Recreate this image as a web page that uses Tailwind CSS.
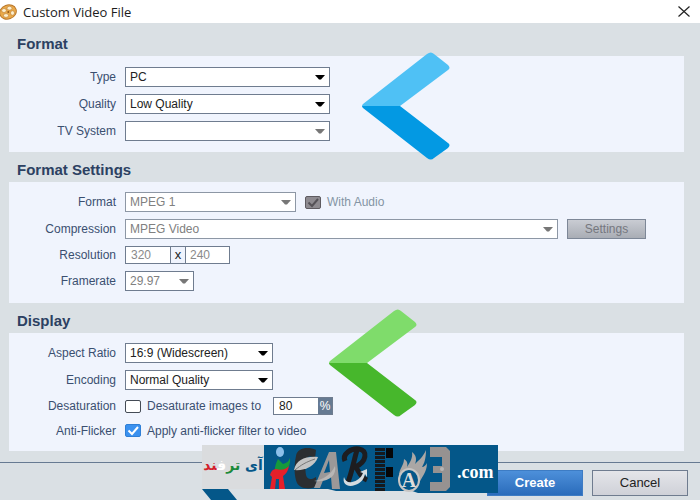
<!DOCTYPE html>
<html lang="en">
<head>
  <meta charset="UTF-8">
  <meta name="viewport" content="width=device-width, initial-scale=1.0">
  <title>Custom Video File</title>
  <script src="https://cdn.jsdelivr.net/npm/@tailwindcss/browser@4"></script>
</head>
<body class="bg-[#dae0e4] font-['Liberation_Sans',sans-serif] text-[12px] text-[#3a4f70]">
  <svg class="absolute h-0 w-0">
    <symbol id="caret" viewBox="0 0 10 5"><path d="M0 0h10L6 4.500H4z" fill="currentColor"/></symbol>
    <symbol id="tick" viewBox="0 0 16 13"><path d="M3.500 6.500l3.500 3.500 6-7" fill="none" stroke="currentColor" stroke-width="2"/></symbol>
    <clipPath id="upper"><path d="M0 0h88v54H0z"/></clipPath>
    <clipPath id="lower"><path d="M0 54h88v54H0z"/></clipPath>
    <path id="chevron" d="M1 52L65 2q4-3 7 0l14 11q3 3 0 5L38 54l48 37q3 2 0 5l-14 10q-3 3-7 0L1 56q-2-2 0-4z"/>
  </svg>

  <div class="relative min-h-screen overflow-hidden">
    <!-- Title bar -->
    <header class="flex h-[23px] items-center justify-between bg-white pr-[10px]">
      <div class="flex items-center gap-[6px]">
        <svg class="h-4 w-[17px]" viewBox="0 0 17 16">
          <ellipse cx="8" cy="8" rx="9" ry="7.500" transform="rotate(-20 8 8)" fill="#b9772a"/>
          <ellipse cx="8" cy="8" rx="8" ry="6.500" transform="rotate(-20 8 8)" fill="#e9a94a"/>
          <g fill="#fdf0cf" stroke="#b06f22" stroke-width=".5">
            <ellipse cx="4" cy="6.500" rx="2.300" ry="2"/>
            <ellipse cx="9.500" cy="4.200" rx="2.500" ry="1.900"/>
            <ellipse cx="12.500" cy="9" rx="2" ry="2.200"/>
            <ellipse cx="6" cy="11.500" rx="2.500" ry="1.900"/>
          </g>
          <circle cx="8.300" cy="8" r="1" fill="#8f5716"/>
        </svg>
        <h1 class="font-['Open_Sans',sans-serif] text-[13px] leading-5 text-[#1c1c1c]">Custom Video File</h1>
      </div>
      <button type="button" aria-label="Close">
        <svg class="h-[11px] w-[12px]" viewBox="0 0 12 11"><path d="M.5.5l11 10M11.500.5l-11 10" stroke="#222" stroke-width="1.200"/></svg>
      </button>
    </header>

    <main class="pt-[3px] pr-4 pl-[9px]">
      <!-- Format -->
      <section class="pt-[6px]">
        <h2 class="px-2 text-[15px] leading-6 font-bold text-[#2c4162]">Format</h2>
        <div class="flex flex-col gap-[7px] bg-[#f0f4fd] py-[11px]">
          <div class="flex items-center gap-[9px]">
            <label for="type" class="w-[107px] text-right">Type</label>
            <div class="relative w-[205px]">
              <select id="type" class="block h-5 w-full appearance-none border border-[#6f7c8f] bg-white px-1 text-[#222]"><option>PC</option></select>
              <svg class="pointer-events-none absolute top-[8px] right-[5px] h-[5px] w-[10px] text-black"><use href="#caret"/></svg>
            </div>
          </div>
          <div class="flex items-center gap-[9px]">
            <label for="quality" class="w-[107px] text-right">Quality</label>
            <div class="relative w-[205px]">
              <select id="quality" class="block h-5 w-full appearance-none border border-[#6f7c8f] bg-white px-1 text-[#222]"><option>Low Quality</option></select>
              <svg class="pointer-events-none absolute top-[8px] right-[5px] h-[5px] w-[10px] text-black"><use href="#caret"/></svg>
            </div>
          </div>
          <div class="flex items-center gap-[9px]">
            <label for="tv" class="w-[107px] text-right">TV System</label>
            <div class="relative w-[205px]">
              <select id="tv" disabled class="block h-5 w-full appearance-none border border-[#6f7c8f] bg-white px-1 opacity-100"><option></option></select>
              <svg class="pointer-events-none absolute top-[8px] right-[5px] h-[5px] w-[10px] text-[#777]"><use href="#caret"/></svg>
            </div>
          </div>
        </div>
      </section>

      <!-- Format settings -->
      <section class="pt-[6px]">
        <h2 class="px-2 text-[15px] leading-6 font-bold text-[#2c4162]">Format Settings</h2>
        <div class="flex flex-col gap-[7px] bg-[#f0f4fd] pt-[10px] pb-3 pr-[38px]">
          <div class="flex items-center gap-[9px]">
            <label for="format" class="w-[107px] text-right">Format</label>
            <div class="relative w-[171px]">
              <select id="format" disabled class="block h-5 w-full appearance-none border border-[#8d97a5] bg-white px-1 text-[#808080] opacity-100"><option>MPEG 1</option></select>
              <svg class="pointer-events-none absolute top-[8px] right-[5px] h-[5px] w-[10px] text-[#777]"><use href="#caret"/></svg>
            </div>
            <label class="relative flex items-center gap-[6px] text-[#8494a4]">
              <input type="checkbox" checked disabled class="h-[13px] w-4 appearance-none rounded-[2px] border border-[#5e5b60] bg-[#8e8b90]">
              <svg class="pointer-events-none absolute left-0 h-[13px] w-4 text-[#555257]"><use href="#tick"/></svg>
              With Audio
            </label>
          </div>
          <div class="flex items-center gap-[9px]">
            <label for="compression" class="w-[107px] shrink-0 text-right">Compression</label>
            <div class="relative flex-1">
              <select id="compression" disabled class="block h-5 w-full appearance-none border border-[#8d97a5] bg-white px-1 text-[#808080] opacity-100"><option>MPEG Video</option></select>
              <svg class="pointer-events-none absolute top-[8px] right-[5px] h-[5px] w-[10px] text-[#777]"><use href="#caret"/></svg>
            </div>
            <button type="button" disabled class="h-5 w-[79px] border border-[#7d8797] bg-linear-to-b from-[#c9ccd3] to-[#a9adb5] text-[#75777e]">Settings</button>
          </div>
          <div class="flex items-center gap-[9px]">
            <label for="res-width" class="w-[107px] text-right">Resolution</label>
            <div class="flex h-[18px] border border-[#6f7c8f] bg-white">
              <input id="res-width" type="text" value="320" disabled class="w-[44px] px-[5px] text-[#8a8a8a]">
              <span class="w-4 border-x border-[#6f7c8f] bg-[#f0f4fd] text-center text-[13px] leading-4 text-[#222]">x</span>
              <input type="text" value="240" disabled aria-label="Resolution height" class="w-[43px] px-1 text-[#8a8a8a]">
            </div>
          </div>
          <div class="flex items-center gap-[9px]">
            <label for="framerate" class="w-[107px] text-right">Framerate</label>
            <div class="relative w-[69px]">
              <select id="framerate" disabled class="block h-5 w-full appearance-none border border-[#6f7c8f] bg-white px-1 text-[#808080] opacity-100"><option>29.97</option></select>
              <svg class="pointer-events-none absolute top-[8px] right-[5px] h-[5px] w-[10px] text-[#777]"><use href="#caret"/></svg>
            </div>
          </div>
        </div>
      </section>

      <!-- Display -->
      <section class="pt-[6px]">
        <h2 class="px-2 text-[15px] leading-6 font-bold text-[#2c4162]">Display</h2>
        <div class="flex flex-col gap-[7px] bg-[#f0f4fd] pt-[10px] pb-3">
          <div class="flex items-center gap-[9px]">
            <label for="aspect" class="w-[107px] text-right">Aspect Ratio</label>
            <div class="relative w-[148px]">
              <select id="aspect" class="block h-5 w-full appearance-none border border-[#6f7c8f] bg-white px-1 text-[#222]"><option>16:9 (Widescreen)</option></select>
              <svg class="pointer-events-none absolute top-[8px] right-[5px] h-[5px] w-[10px] text-black"><use href="#caret"/></svg>
            </div>
          </div>
          <div class="flex items-center gap-[9px]">
            <label for="encoding" class="w-[107px] text-right">Encoding</label>
            <div class="relative w-[148px]">
              <select id="encoding" class="block h-5 w-full appearance-none border border-[#6f7c8f] bg-white px-1 text-[#222]"><option>Normal Quality</option></select>
              <svg class="pointer-events-none absolute top-[8px] right-[5px] h-[5px] w-[10px] text-black"><use href="#caret"/></svg>
            </div>
          </div>
          <div class="flex h-[18px] items-center gap-[9px]">
            <span class="w-[107px] text-right">Desaturation</span>
            <label class="flex w-[139px] items-center gap-[6px] whitespace-nowrap">
              <input type="checkbox" class="h-[13px] w-4 appearance-none rounded-[2px] border border-[#444b55] bg-white">
              Desaturate images to
            </label>
            <div class="flex h-[18px] border border-[#6f7c8f]">
              <input type="text" value="80" aria-label="Desaturation percent" class="w-[44px] bg-white px-[5px] text-[#222]">
              <span class="w-[14px] bg-[#667a92] text-center leading-4 text-white">%</span>
            </div>
          </div>
          <div class="flex h-[17px] items-center gap-[9px]">
            <span class="w-[107px] text-right">Anti-Flicker</span>
            <label class="relative flex items-center gap-[6px]">
              <input type="checkbox" checked class="h-[13px] w-4 appearance-none rounded-[2px] border border-[#2f7fd6] bg-[#3b91ef]">
              <svg class="pointer-events-none absolute left-0 h-[13px] w-4 text-white"><use href="#tick"/></svg>
              Apply anti-flicker filter to video
            </label>
          </div>
        </div>
      </section>
    </main>

    <footer class="mt-[11px] flex justify-end gap-[9px] border-t border-[#667a92] px-3 pt-[7px] pb-1">
      <button type="button" class="h-[26px] w-24 border border-[#3d7cc4] bg-linear-to-b from-[#4d90da] to-[#2a6cbb] text-[13px] font-bold text-white">Create</button>
      <button type="button" class="h-[26px] w-24 border border-[#6f7c8f] bg-linear-to-b from-[#e4e5e9] to-[#cfd1d8] text-[13px] text-[#222]">Cancel</button>
    </footer>

    <!-- Pointers laid over the form -->
    <svg class="pointer-events-none absolute top-[52px] left-[362px] h-[108px] w-[88px]" viewBox="0 0 88 108">
      <use href="#chevron" clip-path="url(#upper)" fill="#4fc1f5"/>
      <use href="#chevron" clip-path="url(#lower)" fill="#0399e3"/>
    </svg>
    <svg class="pointer-events-none absolute top-[309px] left-[329px] h-[108px] w-[88px]" viewBox="0 0 88 108">
      <use href="#chevron" clip-path="url(#upper)" fill="#7fdc6b"/>
      <use href="#chevron" clip-path="url(#lower)" fill="#47b72c"/>
    </svg>

    <!-- Site logo -->
    <div class="absolute top-[445px] left-[202px] h-[55px] w-[296px]">
      <svg class="absolute inset-0 h-[55px] w-[296px]" viewBox="0 0 296 55">
        <path d="M0 0h62v44H0z" fill="#dadcde"/>
        <path d="M62 0h234v48h-80l-6-2h-76l-8-2H62z" fill="#045789"/>
        <path d="M0 44h26l9 11H9z" fill="#045789"/>
        <!-- figure -->
        <ellipse cx="78" cy="7" rx="4" ry="5" fill="#8cc0ea"/>
        <path d="M88 13c1 7-3 13-8 16l-7 3c-1-7 0-12 3-18l5 5c4-1 6-3 7-6z" fill="#159a3c"/>
        <path d="M87 21c-1 5-3 8-6 10l2 13h-6l0-10-3 0-1 10h-5l2-12-2-2c1-4 3-6 6-6 6 2 10 0 13-3z" fill="#e5202a"/>
        <!-- leaf C -->
        <path d="M114 5c-8-4-19-2-20 6-2 9-2 20 1 27 3 6 14 7 20 3l-1-9c-4 3-9 3-10-2-1-7-1-14 1-17 2-2 6-2 8 1z" fill="#2b2e31"/>
        <path d="M92 25c2-10 11-14 24-13-3 9-13 14-24 13z" fill="#c4c4c4"/>
        <path d="M93 25c6-5 11-8 20-11" stroke="#777" fill="none"/>
        <!-- A -->
        <path d="M112 43l15-36h7l4 37h-8l-1-12-7 1-4 10zM122 28l6-1-1-12z" fill="#9b9898"/>
        <path d="M112 36c8-1 17-6 21-15 2 9-6 17-21 15z" fill="#b8b6b5"/>
        <!-- R -->
        <path d="M143 16c-3-7 6-13 14-12 9 1 8 13-4 18M155 5c-3 10-5 22-9 32M153 21c4 5 5 11 12 14" stroke="#1d1d20" stroke-width="5" fill="none"/>
        <path d="M142 32c-2 7 4 11 11 8 6-2 9-6 10-11l2 3 0-8-7 3 3 1c-2 5-6 8-11 9-4 1-7-1-8-5z" fill="#d5dce0"/>
        <!-- film F -->
        <path d="M178 3v44" stroke="#15191d" stroke-width="10" stroke-dasharray="3 1"/>
        <path d="M184 3h7v10h-7zM184 22h7v10h-7z" fill="#050608"/>
        <!-- flame A -->
        <path d="M197 29c1-6 5-9 5-15 3 2 4 4 3 8 3-5 6-9 5-15 4 3 5 7 3 12 4-4 8-7 11-14 0 9-2 14-4 17 2 0 4-2 5-4 0 10-6 14-8 21z" fill="#aaa7a5"/>
        <ellipse cx="207" cy="35" rx="10" ry="11" fill="#045789" stroke="#c7c5c3" stroke-width="2"/>
        <text x="207" y="42" text-anchor="middle" fill="#dedddb" font-family="Liberation Serif, serif" font-size="20" font-weight="bold">A</text>
        <!-- D -->
        <path d="M228 2h16l4 4v36l-4 4h-16v-9h12V28h-9v-7h9v-9h-12z" fill="#969291"/>
        <circle cx="240" cy="24" r="2" fill="#b9b6b4"/>
        <text x="255" y="33" fill="#fff" font-family="Liberation Serif, serif" font-size="18" font-weight="bold">.com</text>
      </svg>
      <p dir="rtl" lang="fa" class="absolute top-[8px] left-0 w-[62px] text-center font-['DejaVu_Sans',sans-serif] text-[14px] leading-6 font-bold whitespace-nowrap"><span class="text-[#045789]">آی</span> <span class="text-[#1c8a3a]">تر</span><span class="text-white">ف</span><span class="text-[#d31f2c]">ند</span></p>
    </div>
  </div>
</body>
</html>
